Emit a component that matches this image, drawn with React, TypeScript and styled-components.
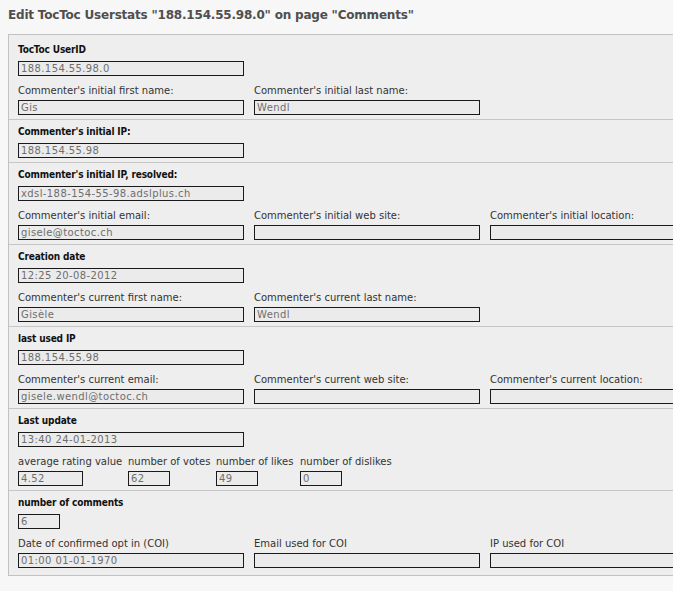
import React from "react";
import styled, { createGlobalStyle } from "styled-components";

const Global = createGlobalStyle`
  html, body { margin: 0; padding: 0; }
  body {
    background: #f7f7f7;
    padding: 8px;
    overflow: hidden;
    font-family: Verdana, "DejaVu Sans", sans-serif;
    font-size: 10px;
    color: #222;
  }
`;

const Title = styled.h1`
  margin: 0 0 12px 0;
  font-size: 12px;
  line-height: 14px;
  font-weight: bold;
  letter-spacing: -0.2px;
  color: #4f4f4f;
  white-space: nowrap;
`;

const Panel = styled.div`
  width: 760px;
  border: 1px solid #c2c2c2;
  background: #eeeeee;
  padding-top: 3px;
  padding-bottom: 3px;
`;

const Section = styled.div`
  padding: 5px 0 4px 9px;
  & + & { border-top: 1px solid #c6c6c6; }
`;

const Head = styled.div`
  font-family: "DejaVu Sans Condensed", "DejaVu Sans", sans-serif;
  font-stretch: condensed;
  font-weight: bold;
  letter-spacing: -0.15px;
  line-height: 13px;
  height: 13px;
  color: #111;
  white-space: nowrap;
  margin-bottom: 5px;
`;

const Row = styled.div`
  display: flex;
  gap: 10px;
  margin-top: 8px;
`;

const Col = styled.div<{ $w?: number }>`
  display: flex;
  flex-direction: column;
  gap: 3px;
  ${(p) => (p.$w ? `width: ${p.$w}px;` : "")}
`;

const Label = styled.div`
  line-height: 13px;
  height: 13px;
  color: #333;
  white-space: nowrap;
`;

const Field = styled.div<{ $w: number }>`
  box-sizing: border-box;
  width: ${(p) => p.$w}px;
  height: 15px;
  border: 1px solid #1a1a1a;
  background: #ebebeb;
  color: #6e6e6e;
  line-height: 13px;
  padding-left: 2px;
  letter-spacing: 0.4px;
  white-space: nowrap;
  overflow: hidden;
`;

type F = { label: string; value: string };

const BigRow = ({ items }: { items: F[] }) => (
  <Row>
    {items.map((it) => (
      <Col key={it.label} $w={226}>
        <Label>{it.label}</Label>
        <Field $w={226}>{it.value}</Field>
      </Col>
    ))}
  </Row>
);

const HeadBlock = ({ label, value, w = 226 }: { label: string; value: string; w?: number }) => (
  <>
    <Head>{label}</Head>
    <Field $w={w}>{value}</Field>
  </>
);

const stats = [
  { label: "average rating value", value: "4.52", col: 100, w: 65 },
  { label: "number of votes", value: "62", col: 78, w: 42 },
  { label: "number of likes", value: "49", col: 74, w: 42 },
  { label: "number of dislikes", value: "0", col: 90, w: 42 },
];

export default function App() {
  return (
    <>
      <Global />
      <Title>Edit TocToc Userstats "188.154.55.98.0" on page "Comments"</Title>
      <Panel>
        <Section>
          <HeadBlock label="TocToc UserID" value="188.154.55.98.0" />
          <BigRow
            items={[
              { label: "Commenter's initial first name:", value: "Gis" },
              { label: "Commenter's initial last name:", value: "Wendl" },
            ]}
          />
        </Section>
        <Section>
          <HeadBlock label="Commenter's initial IP:" value="188.154.55.98" />
        </Section>
        <Section>
          <HeadBlock label="Commenter's initial IP, resolved:" value="xdsl-188-154-55-98.adslplus.ch" />
          <BigRow
            items={[
              { label: "Commenter's initial email:", value: "gisele@toctoc.ch" },
              { label: "Commenter's initial web site:", value: "" },
              { label: "Commenter's initial location:", value: "" },
            ]}
          />
        </Section>
        <Section>
          <HeadBlock label="Creation date" value="12:25 20-08-2012" />
          <BigRow
            items={[
              { label: "Commenter's current first name:", value: "Gisèle" },
              { label: "Commenter's current last name:", value: "Wendl" },
            ]}
          />
        </Section>
        <Section>
          <HeadBlock label="last used IP" value="188.154.55.98" />
          <BigRow
            items={[
              { label: "Commenter's current email:", value: "gisele.wendl@toctoc.ch" },
              { label: "Commenter's current web site:", value: "" },
              { label: "Commenter's current location:", value: "" },
            ]}
          />
        </Section>
        <Section>
          <HeadBlock label="Last update" value="13:40 24-01-2013" />
          <Row>
            {stats.map((s) => (
              <Col key={s.label} $w={s.col}>
                <Label>{s.label}</Label>
                <Field $w={s.w}>{s.value}</Field>
              </Col>
            ))}
          </Row>
        </Section>
        <Section>
          <HeadBlock label="number of comments" value="6" w={42} />
          <BigRow
            items={[
              { label: "Date of confirmed opt in (COI)", value: "01:00 01-01-1970" },
              { label: "Email used for COI", value: "" },
              { label: "IP used for COI", value: "" },
            ]}
          />
        </Section>
      </Panel>
    </>
  );
}
